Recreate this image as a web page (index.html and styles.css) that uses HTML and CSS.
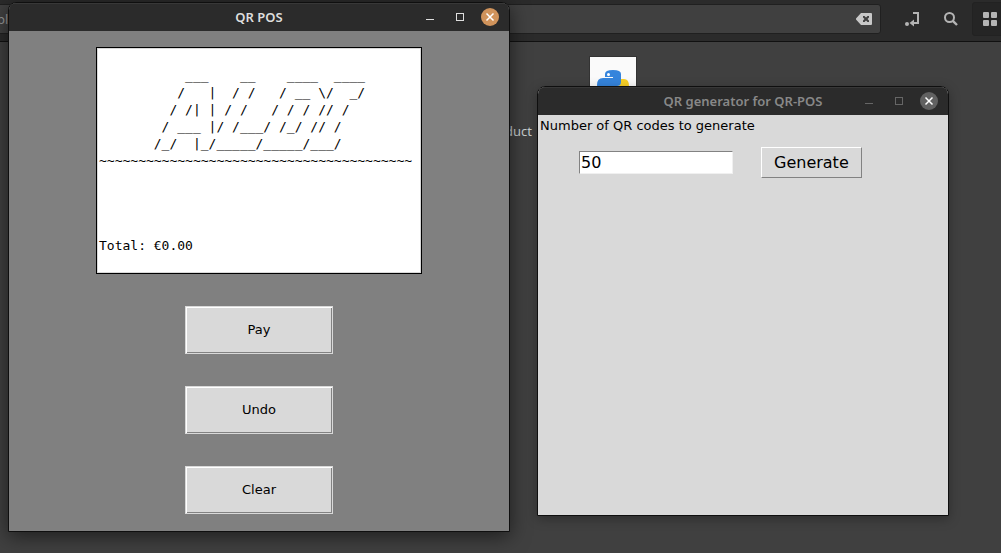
FILE: index.html
```html
<!DOCTYPE html>
<html lang="en">
<head>
<meta charset="utf-8">
<title>QR POS</title>
<link rel="stylesheet" href="styles.css">
</head>
<body>
<div class="desktop">
  <header class="toolbar">
    <div class="pathbar">
      <input class="path" type="text" value="pla" aria-label="Location">
      <button class="icon-button" type="button" aria-label="Clear location">
        <svg width="16" height="12" viewBox="0 0 16 12"><path fill="#c8c8c8" fill-rule="evenodd" d="M5 0h10a1 1 0 0 1 1 1v10a1 1 0 0 1-1 1H5L0 6.500v-1zM7 3v1.500L8.500 6 7 7.500V9h1.500L10 7.600 11.500 9H13V7.500L11.500 6 13 4.500V3h-1.500L10 4.400 8.500 3z"/></svg>
      </button>
    </div>
    <div class="tools">
      <button class="icon-button" type="button" aria-label="Toggle location entry">
        <svg width="16" height="16" viewBox="0 0 16 16"><circle cx="3" cy="13" r="2" fill="#b4b4b4"/><path d="M9 2h5v10H7" fill="none" stroke="#b4b4b4" stroke-width="2"/><path d="M10 8.500v7L5.500 12z" fill="#b4b4b4"/></svg>
      </button>
      <button class="icon-button" type="button" aria-label="Search">
        <svg width="16" height="16" viewBox="0 0 16 16" fill="none" stroke="#b4b4b4"><circle cx="6.500" cy="6.500" r="4.500" stroke-width="2"/><path d="M9.800 9.800l4.200 4.200" stroke-width="2.400"/></svg>
      </button>
      <button class="icon-button active" type="button" aria-label="Icon view">
        <svg width="16" height="16" viewBox="0 0 16 16" fill="#b4b4b4"><rect x="1" y="1" width="6" height="6" rx="1"/><rect x="9" y="1" width="6" height="6" rx="1"/><rect x="1" y="9" width="6" height="6" rx="1"/><rect x="9" y="9" width="6" height="6" rx="1"/></svg>
      </button>
    </div>
  </header>

  <main class="files">
    <div class="file-name">duct</div>
    <div class="thumb">
      <svg width="46" height="46" viewBox="0 0 46 46" role="img" aria-label="Python file">
        <path fill="#f8d026" d="M31 22h3q5 0 5 7v5q0 6-6 6H15v-6q0-5 5-5h7q4 0 4-5z"/>
        <path fill="#3584dc" d="M15 17q0-4 8-4t8 4v8q0 4-4 4h-8q-5 0-5 6h-1q-6 0-6-7t6-7h10v-1h-8z"/>
        <circle cx="18.500" cy="17.500" r="1.500" fill="#fff"/>
      </svg>
    </div>
  </main>

  <section class="window pos" aria-label="QR POS">
    <header class="titlebar">
      <h1 class="title">QR POS</h1>
      <div class="controls">
        <button class="control" type="button" aria-label="Minimize"><svg width="18" height="18"><path d="M5 11.500h8" stroke="currentColor"/></svg></button>
        <button class="control" type="button" aria-label="Maximize"><svg width="18" height="18"><rect x="5.500" y="5.500" width="7" height="7" fill="none" stroke="currentColor"/></svg></button>
        <button class="control close" type="button" aria-label="Close"><svg width="18" height="18"><path d="M5.500 5.500l7 7m0-7l-7 7" stroke="#fff" stroke-width="1.500"/></svg></button>
      </div>
    </header>
    <div class="pos-body">
<pre class="receipt">

           ___    __    ____  ____
          /   |  / /   / __ \/  _/
         / /| | / /   / / / // /
        / ___ |/ /___/ /_/ // /
       /_/  |_/_____/_____/___/
~~~~~~~~~~~~~~~~~~~~~~~~~~~~~~~~~~~~~~~~




Total: €0.00
</pre>
      <button class="action" type="button">Pay</button>
      <button class="action" type="button">Undo</button>
      <button class="action" type="button">Clear</button>
    </div>
  </section>

  <section class="window generator" aria-label="QR generator">
    <header class="titlebar">
      <h2 class="title">QR generator for QR-POS</h2>
      <div class="controls">
        <button class="control" type="button" aria-label="Minimize"><svg width="18" height="18"><path d="M5 11.500h8" stroke="currentColor"/></svg></button>
        <button class="control" type="button" aria-label="Maximize"><svg width="18" height="18"><rect x="5.500" y="5.500" width="7" height="7" fill="none" stroke="currentColor"/></svg></button>
        <button class="control close" type="button" aria-label="Close"><svg width="18" height="18"><path d="M5.500 5.500l7 7m0-7l-7 7" stroke="#fff" stroke-width="1.500"/></svg></button>
      </div>
    </header>
    <div class="generator-body">
      <label class="field-label" for="count">Number of QR codes to generate</label>
      <div class="field-row">
        <input class="count" id="count" type="text" value="50">
        <button class="generate" type="button">Generate</button>
      </div>
    </div>
  </section>
</div>
</body>
</html>
```
FILE: styles.css
```css
* {
  box-sizing: border-box;
}

body {
  margin: 0;
  font-family: "DejaVu Sans", sans-serif;
  color: #000;
}

button,
input {
  margin: 0;
  font-family: inherit;
  color: inherit;
}

svg {
  display: block;
}

.desktop {
  position: relative;
  min-height: 100vh;
  overflow: hidden;
  background: #404040;
}

.toolbar {
  display: flex;
  align-items: flex-start;
  justify-content: space-between;
  height: 42px;
  background: #2b2b2b;
  border-bottom: 1px solid #111;
}

.pathbar {
  display: flex;
  align-items: center;
  flex: 1;
  height: 30px;
  margin-top: 4px;
  margin-left: -4px;
  padding-right: 8px;
  background: #404040;
  border: 1px solid #202020;
  border-radius: 3px;
}

.path {
  flex: 1;
  min-width: 0;
  padding: 0;
  border: 0;
  background: none;
  color: #999;
  font: 13px "Noto Sans", sans-serif;
}

.icon-button {
  display: grid;
  place-items: center;
  padding: 0;
  border: 0;
  background: none;
}

.tools {
  display: flex;
  gap: 4px;
  margin-top: 2px;
  margin-left: 13px;
  margin-right: -6px;
}

.tools .icon-button {
  width: 35px;
  height: 34px;
}

.tools .active {
  border: 1px solid #222;
  border-radius: 3px;
  background: #252525;
}

.files {
  display: flex;
  align-items: flex-start;
  gap: 57px;
  padding-top: 14px;
  padding-left: 505px;
}

.file-name {
  padding-top: 66px;
  color: #c8d0d2;
  font: 13px/18px "Noto Sans", sans-serif;
}

.thumb {
  border: 1px solid #333;
  background: #fafafa;
}

.window {
  position: absolute;
  border: 1px solid #0f0f0f;
  border-radius: 8px 8px 0 0;
  overflow: hidden;
}

.pos {
  top: 2px;
  left: 8px;
  width: 502px;
  background: #808080;
  box-shadow: 0 4px 20px rgba(0, 0, 0, 0.55);
}

.generator {
  top: 86px;
  left: 537px;
  width: 412px;
  min-height: 430px;
  background: #d9d9d9;
  box-shadow: 0 3px 12px rgba(0, 0, 0, 0.3);
}

.titlebar {
  display: grid;
  grid-template-columns: 1fr auto 1fr;
  align-items: center;
  height: 28px;
  padding: 0 10px;
  background: #2b2b2b;
  box-shadow: inset 0 1px #383838;
  color: #dedede;
}

.generator .titlebar {
  color: #888;
}

.title {
  grid-column: 2;
  margin: 0;
  font: 600 13px/20px "Noto Sans", sans-serif;
}

.controls {
  display: flex;
  justify-content: flex-end;
  gap: 12px;
}

.control {
  width: 18px;
  height: 18px;
  padding: 0;
  border: 0;
  border-radius: 50%;
  background: none;
}

.generator .control {
  color: #666;
}

.pos .close {
  background: #d0935b;
}

.generator .close {
  background: #616161;
}

.pos-body {
  display: flex;
  flex-direction: column;
  align-items: center;
  gap: 32px;
  padding: 16px 16px 17px;
}

.receipt {
  min-width: 326px;
  min-height: 227px;
  margin: 0;
  padding: 2px;
  border: 1px solid #000;
  outline: 1px solid #d9d9d9;
  outline-offset: -2px;
  background: #fff;
  font: 13px/17px "DejaVu Sans Mono", monospace;
}

.action {
  width: 148px;
  height: 48px;
  padding: 0 0 2px;
  border: 1px solid #d9d9d9;
  background: #d9d9d9;
  box-shadow: inset 1px 1px #fff, inset -1px -1px #828282;
  font-size: 13px;
}

.generator-body {
  padding: 0 2px;
}

.field-label {
  display: block;
  font-size: 13px;
  line-height: 21px;
}

.field-row {
  display: flex;
  align-items: center;
  gap: 28px;
  padding-top: 11px;
  padding-left: 39px;
}

.count {
  width: 154px;
  height: 23px;
  padding: 0 1px;
  border: 1px solid;
  border-color: #828282 #f0f0f0 #f0f0f0 #828282;
  background: #fff;
  font-size: 16px;
}

.generate {
  height: 31px;
  padding: 0 12px;
  border: 1px solid;
  border-color: #fff #828282 #828282 #fff;
  background: #d9d9d9;
  font-size: 16px;
}
```
